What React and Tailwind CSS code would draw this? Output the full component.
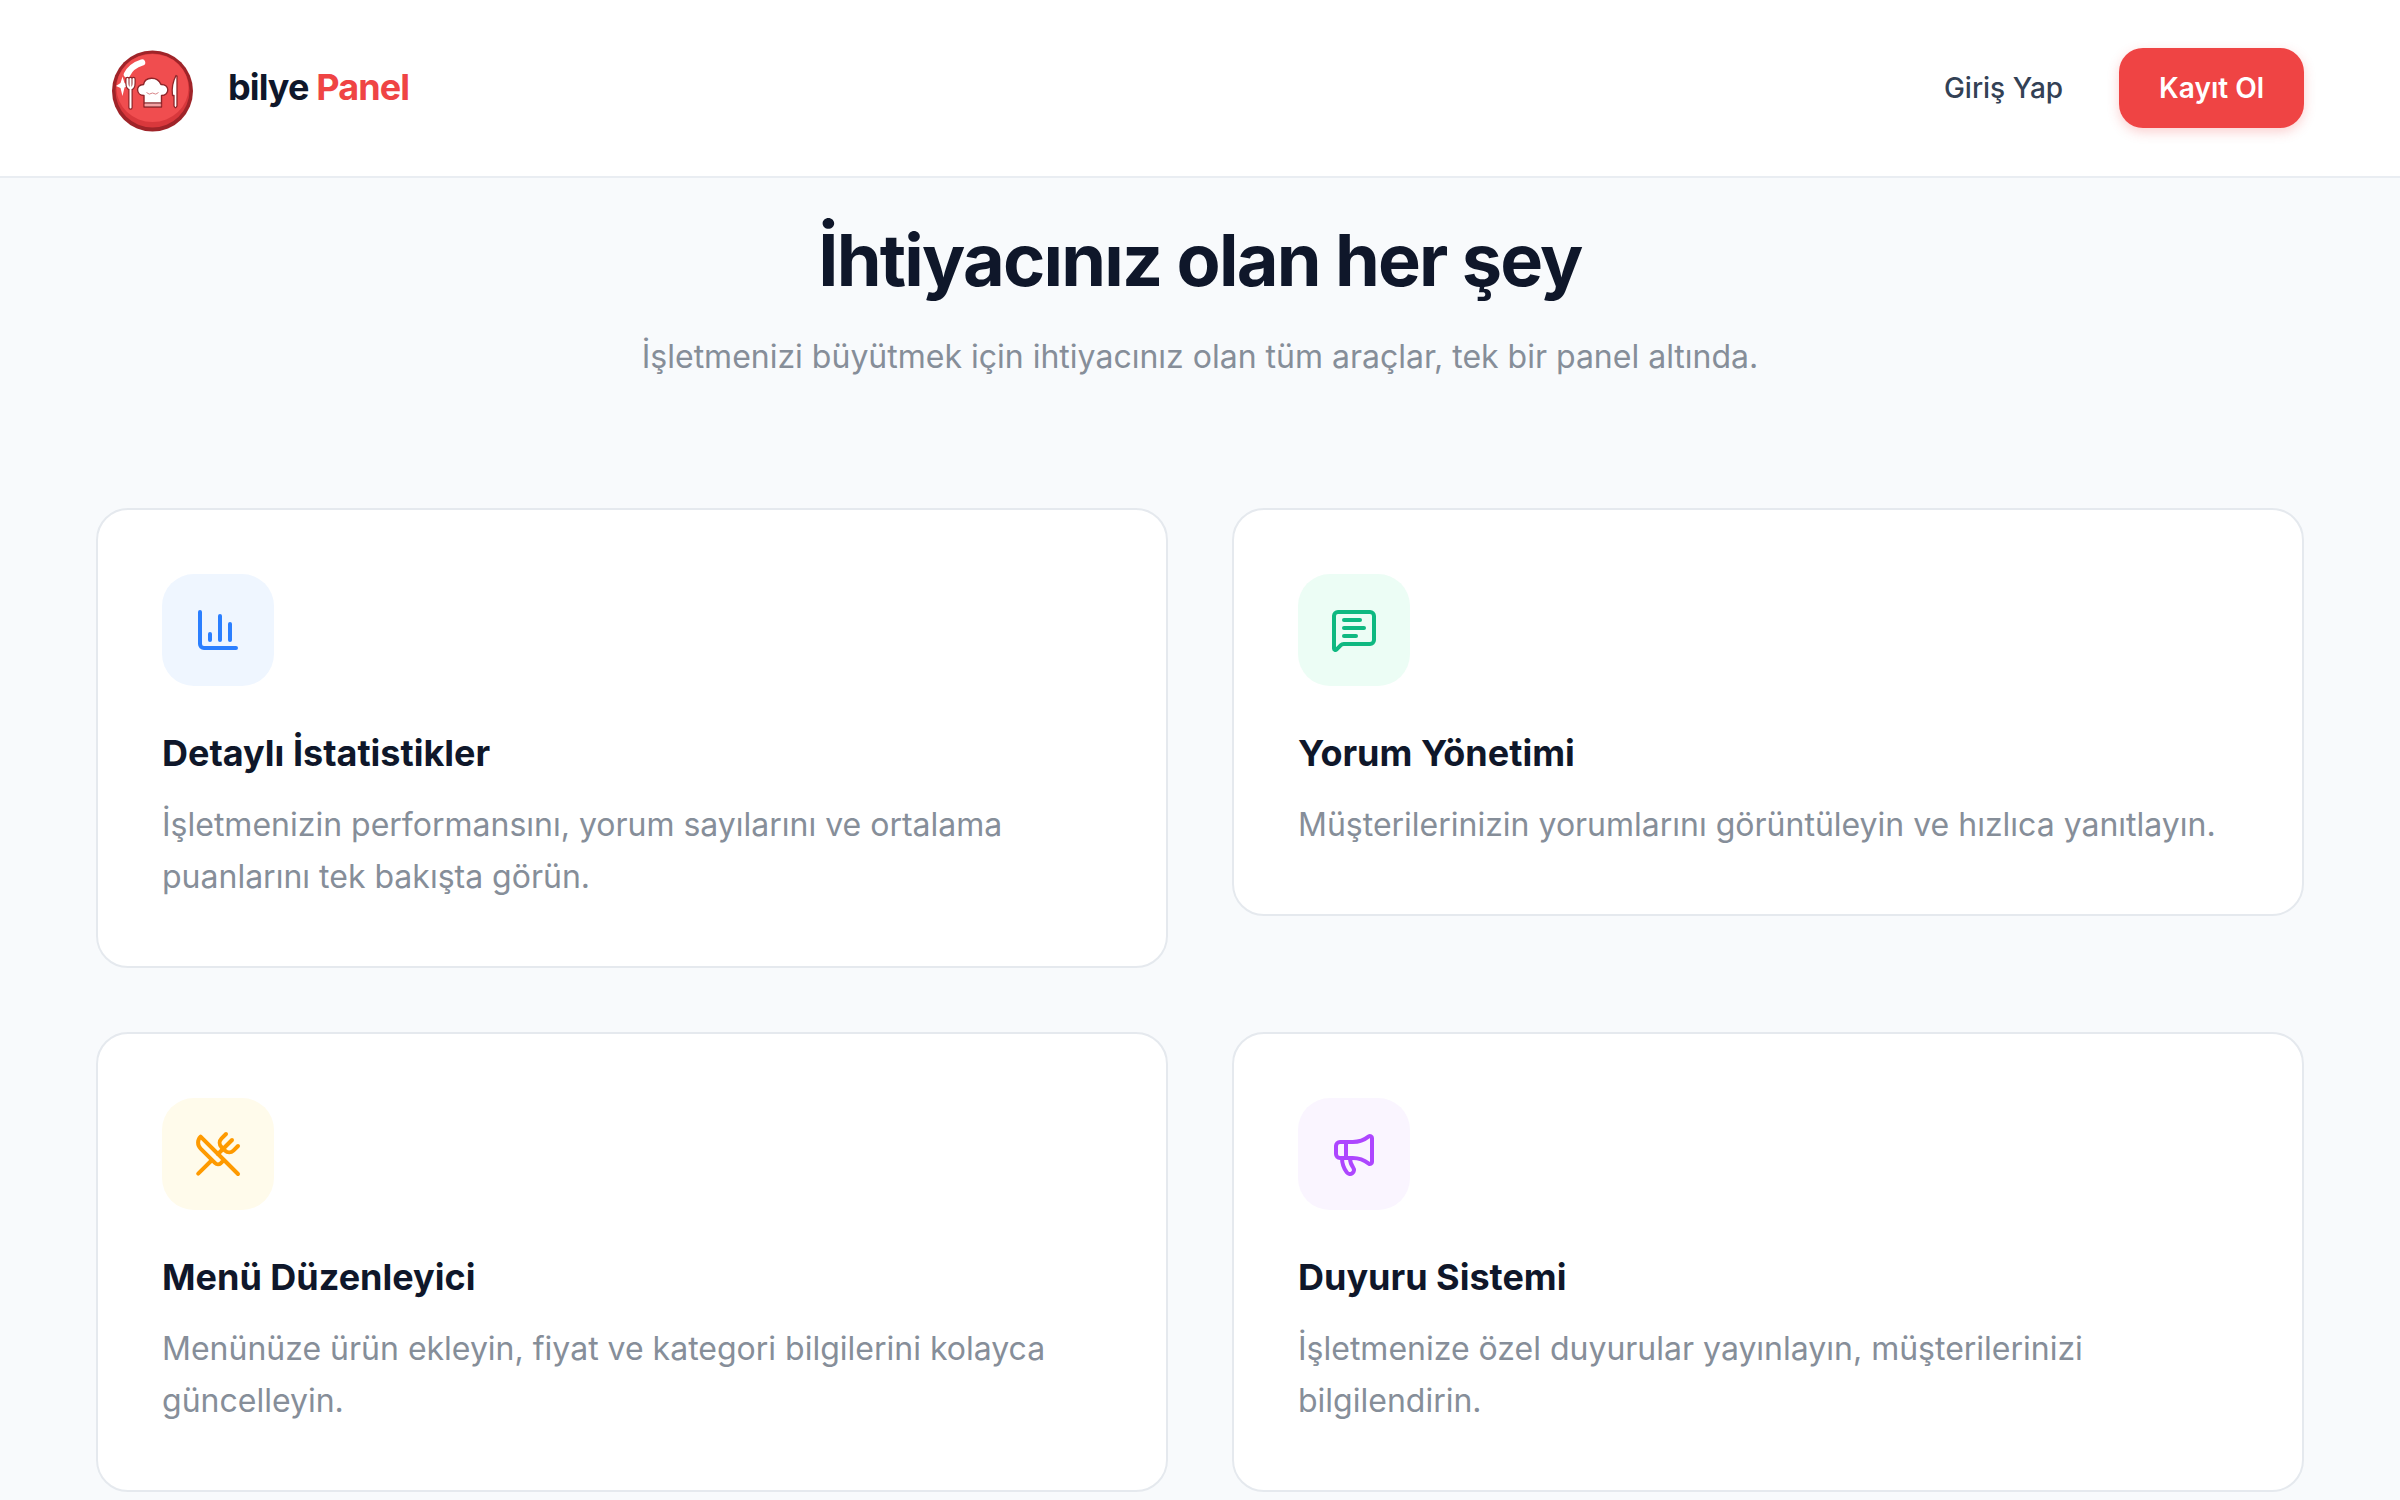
import React from 'react';
import { ChartColumn, MessageSquareText, UtensilsCrossed, Megaphone } from 'lucide-react';

const features = [
    {
        title: 'Detaylı İstatistikler',
        text: 'İşletmenizin performansını, yorum sayılarını ve ortalama puanlarını tek bakışta görün.',
        icon: ChartColumn,
        color: 'bg-[#eff6ff] text-[#2b7fff]',
    },
    {
        title: 'Yorum Yönetimi',
        text: 'Müşterilerinizin yorumlarını görüntüleyin ve hızlıca yanıtlayın.',
        icon: MessageSquareText,
        color: 'bg-[#ecfdf5] text-[#0fb981]',
    },
    {
        title: 'Menü Düzenleyici',
        text: 'Menünüze ürün ekleyin, fiyat ve kategori bilgilerini kolayca güncelleyin.',
        icon: UtensilsCrossed,
        color: 'bg-[#fffbeb] text-[#fe9a00]',
    },
    {
        title: 'Duyuru Sistemi',
        text: 'İşletmenize özel duyurular yayınlayın, müşterilerinizi bilgilendirin.',
        icon: Megaphone,
        color: 'bg-[#faf5ff] text-[#ad46ff]',
    },
];

// Glossy red marble with fork, chef hat and knife
const Logo = () => (
    <svg viewBox="0 0 112 112" className="size-28" aria-hidden="true">
        <circle cx="56.5" cy="59" r="40.5" fill="#9f2429" />
        <circle cx="56.5" cy="58.5" r="37" fill="#d9383c" />
        <ellipse cx="56.5" cy="56" rx="36" ry="34" fill="#f04d4f" />
        {/* Highlight and sparkle */}
        <path d="M31 42.5 Q35 34 46 30.5" fill="none" stroke="#fff" strokeWidth="6.5" strokeLinecap="round" />
        <path d="M26.5 44.5 L28.5 51 L33 53.5 L28.5 55.5 L26.5 64 L24.5 56 L20 54 L24.5 51 Z" fill="#fff" />
        {/* Fork */}
        <path d="M31.5 47 V51 Q31.5 56 34.5 56.5 M37.5 47 V51 Q37.5 56 34.5 56.5 M34.5 47 V75.5" fill="none" stroke="#8f2529" strokeWidth="4.4" strokeLinecap="round" />
        <path d="M31.5 47 V51 Q31.5 56 34.5 56.5 M37.5 47 V51 Q37.5 56 34.5 56.5 M34.5 47 V75.5" fill="none" stroke="#fff" strokeWidth="2" strokeLinecap="round" />
        {/* Chef hat */}
        <path d="M48 75 V63.5 C40 63.5 39 52.5 47.5 52.5 C49 44.5 61.5 44 65 52.5 C74 52 74 63.5 65.5 63.5 V75 Z" fill="#fff" stroke="#8f2529" strokeWidth="1.4" strokeLinejoin="round" />
        <path d="M48 71 H65.5" stroke="#8f2529" strokeWidth="1.4" />
        <path d="M48 73 H65.5" stroke="#e9484b" strokeWidth="1" />
        <path d="M50.5 60.5 Q53 63.5 56.5 61 Q60 63.5 62.5 60.5" fill="none" stroke="#d88588" strokeWidth="1" />
        {/* Knife */}
        <path d="M80 43.5 Q75 53 76.5 63.5 H78 V74 Q79.5 77.5 81 74 V44 Z" fill="#fff" stroke="#8f2529" strokeWidth="1.3" strokeLinejoin="round" />
    </svg>
);

const FeatureCard = ({ title, text, icon: Icon, color }) => (
    <article className="bg-white border-2 border-[#e5e9ee] rounded-[32px] px-16 pt-16 pb-[63px]">
        <div className={`size-28 rounded-[32px] flex items-center justify-center mb-10 ${color}`}>
            <Icon size={48} />
        </div>
        <h3 className="text-[36px] leading-[54px] font-bold text-[#0f172a] mb-[19px]">{title}</h3>
        <p className="text-[32px] leading-[52px] text-[#868e99]">{text}</p>
    </article>
);

const App = () => {
    return (
        <div className="min-h-screen bg-[#f8fafc] font-['Inter',sans-serif]">
            <header className="bg-white border-b-2 border-[#e9edf2] px-24 py-8 flex items-center justify-between">
                <a href="#" className="flex items-center gap-5">
                    <Logo />
                    <span className="text-[36px] leading-[54px] font-bold tracking-tight text-[#0f172a] pb-0.5">
                        bilye <span className="text-[#ef4444]">Panel</span>
                    </span>
                </a>
                <nav className="flex items-center gap-14">
                    <a href="#giris" className="text-[28px] leading-10 font-medium text-[#334155]">Giriş Yap</a>
                    <button type="button" className="h-20 px-10 rounded-3xl bg-[#ef4444] text-white text-[28px] leading-10 font-semibold shadow-[0_4px_12px_rgba(239,68,68,0.25)]">
                        Kayıt Ol
                    </button>
                </nav>
            </header>

            <main className="px-24 pt-[42px]">
                <div className="text-center mb-[125px]">
                    <h2 className="text-[72px] leading-20 font-bold tracking-tight text-[#0f172a] mb-[31px]">İhtiyacınız olan her şey</h2>
                    <p className="text-[32px] leading-[52px] text-[#868e99]">
                        İşletmenizi büyütmek için ihtiyacınız olan tüm araçlar, tek bir panel altında.
                    </p>
                </div>

                <div className="grid grid-cols-2 gap-16 items-start">
                    {features.map(feature => (
                        <FeatureCard key={feature.title} {...feature} />
                    ))}
                </div>
            </main>
        </div>
    );
};

export default App;
